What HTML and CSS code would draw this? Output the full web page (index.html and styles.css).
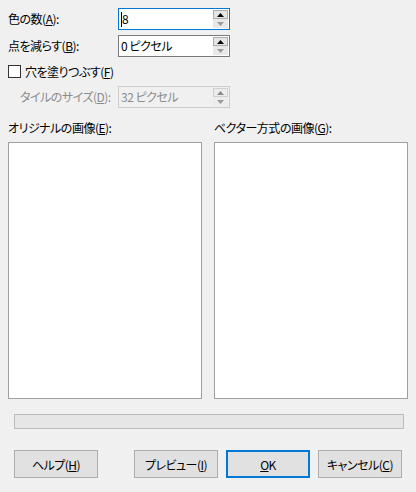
FILE: index.html
```html
<!DOCTYPE html>
<html lang="ja">
<head>
<meta charset="utf-8">
<link rel="stylesheet" href="styles.css">
</head>
<body>
<div class="dialog">
  <div class="fields">
    <label class="lbl">色の数(<u>A</u>):</label>
    <div class="spin focused"><span class="val"><span class="caret"></span>8</span><span class="arrows"><span class="up"><svg width="7" height="4" viewBox="0 0 7 4"><path d="M0 4 L3.5 0 L7 4Z" fill="#000"/></svg></span><span class="down"><svg width="7" height="4" viewBox="0 0 7 4"><path d="M0 0 L3.5 4 L7 0Z" fill="#9a9a9a"/></svg></span></span></div>
    <label class="lbl">点を減らす(<u>B</u>):</label>
    <div class="spin"><span class="val">0 ピクセル</span><span class="arrows"><span class="up"><svg width="7" height="4" viewBox="0 0 7 4"><path d="M0 4 L3.5 0 L7 4Z" fill="#000"/></svg></span><span class="down"><svg width="7" height="4" viewBox="0 0 7 4"><path d="M0 0 L3.5 4 L7 0Z" fill="#9a9a9a"/></svg></span></span></div>
    <div class="check"><span class="box"></span><span>穴を塗りつぶす(<u>F</u>)</span></div>
    <label class="lbl disabled indent">タイルのサイズ(<u>D</u>):</label>
    <div class="spin off"><span class="val">32 ピクセル</span><span class="arrows"><span class="up"><svg width="7" height="4" viewBox="0 0 7 4"><path d="M0 4 L3.5 0 L7 4Z" fill="#8a8a8a"/></svg></span><span class="down"><svg width="7" height="4" viewBox="0 0 7 4"><path d="M0 0 L3.5 4 L7 0Z" fill="#9a9a9a"/></svg></span></span></div>
  </div>
  <div class="images">
    <div class="col">
      <div class="cap">オリジナルの画像(<u>E</u>):</div>
      <div class="panel"></div>
    </div>
    <div class="col">
      <div class="cap">ベクター方式の画像(<u>G</u>):</div>
      <div class="panel"></div>
    </div>
  </div>
  <div class="progress"></div>
  <div class="buttons">
    <button class="btn">ヘルプ(<u>H</u>)</button>
    <button class="btn far">プレビュー(<u>I</u>)</button>
    <button class="btn default"><u>O</u>K</button>
    <button class="btn">キャンセル(<u>C</u>)</button>
  </div>
</div>
</body>
</html>
```
FILE: styles.css
```css
* { box-sizing: border-box; }
html, body { margin: 0; padding: 0; }
body {
  background: #f0f0f0;
  font-family: "Noto Sans CJK JP", "Noto Sans", sans-serif;
  font-size: 12px;
  font-feature-settings: "palt";
  letter-spacing: -0.5px;
  color: #000;
}
u { text-decoration: underline; text-underline-offset: 1px; }
.dialog { width: 416px; height: 492px; }

.fields {
  display: grid;
  grid-template-columns: 110px 112px;
  grid-template-rows: 22px 22px 19px 22px;
  row-gap: 5px;
  padding: 8px 0 0 8px;
}
.lbl { display: flex; align-items: center; line-height: 16px; white-space: nowrap; }
.lbl.disabled { color: #8c8c8c; }
.lbl.indent { padding-left: 12px; }

.spin {
  display: flex;
  align-items: center;
  justify-content: space-between;
  background: #fff;
  border: 1px solid #7a7a7a;
  padding: 0 1px 0 2px;
}
.spin.focused { border-color: #0078d7; }
.spin.off { background: #f0f0f0; border-color: #cccccc; color: #8c8c8c; }
.val { display: flex; align-items: center; line-height: 16px; white-space: nowrap; }
.caret { width: 1px; height: 15px; background: #000; }
.arrows { display: flex; flex-direction: column; width: 15px; height: 18px; }
.arrows span { flex: 1; display: flex; align-items: center; justify-content: center; }
.up { background: #e5e5e5; border: 1px solid #adadad; }
.down { background: #e8e8e8; border: 1px solid #e8e8e8; }
.off .up { background: #ececec; border-color: #d0d0d0; }
.off .down { background: #ececec; border-color: #ececec; }

.check { grid-column: 1 / 3; display: flex; align-items: center; gap: 4px; white-space: nowrap; }
.box { width: 13px; height: 13px; border: 1px solid #333; background: #fff; }

.images {
  display: flex;
  gap: 12px;
  padding: 12px 0 0 8px;
}
.col { display: flex; flex-direction: column; }
.cap { line-height: 16px; height: 16px; margin-bottom: 6px; white-space: nowrap; }
.panel { width: 194px; height: 257px; background: #fff; border: 1px solid #a0a0a0; }

.progress {
  margin: 15px 0 0 14px;
  width: 390px;
  height: 15px;
  background: #e6e6e6;
  border: 1px solid #bcbcbc;
}

.buttons {
  display: flex;
  gap: 8px;
  padding: 21px 0 0 14px;
}
.btn {
  width: 84px;
  height: 28px;
  background: #e1e1e1;
  border: 1px solid #adadad;
  font: inherit;
  letter-spacing: inherit;
  color: #000;
  padding: 0;
}
.btn.far { margin-left: 28px; }
.btn.default { border: 2px solid #0078d7; }
```
